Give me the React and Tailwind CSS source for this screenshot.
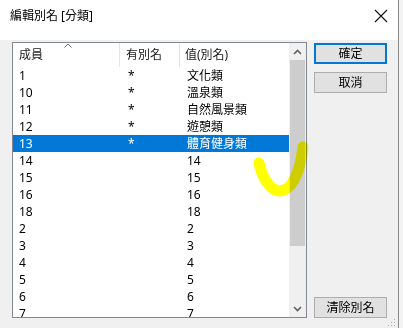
import React from 'react';

const rows = [
  ['1', '*', '文化類'],
  ['10', '*', '溫泉類'],
  ['11', '*', '自然風景類'],
  ['12', '*', '遊憩類'],
  ['13', '*', '體育健身類'],
  ['14', '', '14'],
  ['15', '', '15'],
  ['16', '', '16'],
  ['18', '', '18'],
  ['2', '', '2'],
  ['3', '', '3'],
  ['4', '', '4'],
  ['5', '', '5'],
  ['6', '', '6'],
  ['7', '', '7'],
];

const font = "font-['Noto_Sans','Noto_Sans_CJK_TC',sans-serif]";

function Button({ label, primary }) {
  return (
    <div
      className={`w-[73px] h-[21px] flex items-center justify-center bg-[#e1e1e1] text-[12px] text-black leading-none ${
        primary ? 'border-2 border-[#0078d7]' : 'border border-[#adadad]'
      }`}
    >
      {label}
    </div>
  );
}

export default function App() {
  const selected = 4;

  return (
    <div className={`relative w-[403px] h-[328px] overflow-hidden bg-[#f3f3f3] ${font}`}>
      <div className="w-[399px] h-[328px] flex flex-col border-r border-[#8a8a8a] bg-[#f0f0f0]">
        {/* title bar */}
        <div className="h-[40px] bg-white flex items-center justify-between pl-[10px] pr-[10px] shrink-0">
          <span className="text-[12px] text-black -mt-[8px]">編輯別名 [分類]</span>
          <svg width="14" height="14" viewBox="0 0 14 14" className="-mt-[8px]">
            <path d="M1 1 L13 13 M13 1 L1 13" stroke="#111" strokeWidth="1.1" fill="none" />
          </svg>
        </div>

        {/* body */}
        <div className="flex pt-[2px] pl-[12px] gap-[7px] flex-1">
          {/* list box */}
          <div className="w-[295px] h-[276px] border border-[#828790] bg-white flex overflow-hidden">
            <div className="w-[276px] flex flex-col">
              <div className="relative h-[24px] flex shrink-0 text-[12px] text-[#1a1a1a]">
                <div className="w-[107px] border-r border-[#e5e5e5] pl-[6px] pt-[3px]">成員</div>
                <div className="w-[60px] border-r border-[#e5e5e5] pl-[6px] pt-[3px]">有別名</div>
                <div className="flex-1 pl-[5px] pt-[3px]">值(別名)</div>
                <svg width="8" height="5" viewBox="0 0 8 5" className="absolute left-[51px] top-[0px]">
                  <path d="M0.5 4.5 L4 1 L7.5 4.5" stroke="#6a6a6a" strokeWidth="1" fill="none" />
                </svg>
              </div>
              {rows.map((r, i) => (
                <div
                  key={i}
                  className={`h-[17px] shrink-0 flex items-center text-[12px] leading-none ${
                    i === selected ? 'bg-[#0078d7] text-white' : 'text-black'
                  }`}
                >
                  <div className="w-[108px] pl-[6px]">{r[0]}</div>
                  <div className="w-[60px] pl-[7px]">{r[1]}</div>
                  <div className="flex-1 pl-[6px]">{r[2]}</div>
                </div>
              ))}
            </div>
            {/* scrollbar */}
            <div className="w-[17px] bg-[#f0f0f0] flex flex-col items-center shrink-0">
              <div className="h-[17px] flex items-center justify-center shrink-0">
                <svg width="9" height="6" viewBox="0 0 9 6">
                  <path d="M1 5 L4.5 1.5 L8 5" stroke="#606060" strokeWidth="1.6" fill="none" />
                </svg>
              </div>
              <div className="w-[15px] h-[186px] bg-[#cdcdcd] shrink-0" />
              <div className="flex-1" />
              <div className="h-[17px] flex items-center justify-center shrink-0">
                <svg width="9" height="6" viewBox="0 0 9 6">
                  <path d="M1 1 L4.5 4.5 L8 1" stroke="#606060" strokeWidth="1.6" fill="none" />
                </svg>
              </div>
            </div>
          </div>

          {/* buttons */}
          <div className="flex flex-col pt-[1px] pb-[11px] h-[287px]">
            <Button label="確定" primary />
            <div className="h-[8px]" />
            <Button label="取消" />
            <div className="flex-1" />
            <Button label="清除別名" />
          </div>
        </div>
      </div>

      {/* resize grip */}
      <svg width="8" height="8" viewBox="0 0 8 8" className="absolute left-[388px] top-[319px]">
        <rect x="6" y="0" width="1" height="1" fill="#b0b0b0" />
        <rect x="3" y="3" width="1" height="1" fill="#b0b0b0" />
        <rect x="6" y="3" width="1" height="1" fill="#b0b0b0" />
        <rect x="0" y="6" width="1" height="1" fill="#b0b0b0" />
        <rect x="3" y="6" width="1" height="1" fill="#b0b0b0" />
        <rect x="6" y="6" width="1" height="1" fill="#b0b0b0" />
      </svg>

      {/* yellow annotation check */}
      <svg
        width="70"
        height="65"
        viewBox="0 0 70 65"
        className="absolute left-[245px] top-[135px] mix-blend-multiply pointer-events-none"
      >
        <path
          d="M14 28 C 17 42, 25 56, 35 56 C 47 55, 55 38, 58 12"
          stroke="#ffff00"
          strokeWidth="11"
          strokeLinecap="round"
          fill="none"
        />
      </svg>
    </div>
  );
}
